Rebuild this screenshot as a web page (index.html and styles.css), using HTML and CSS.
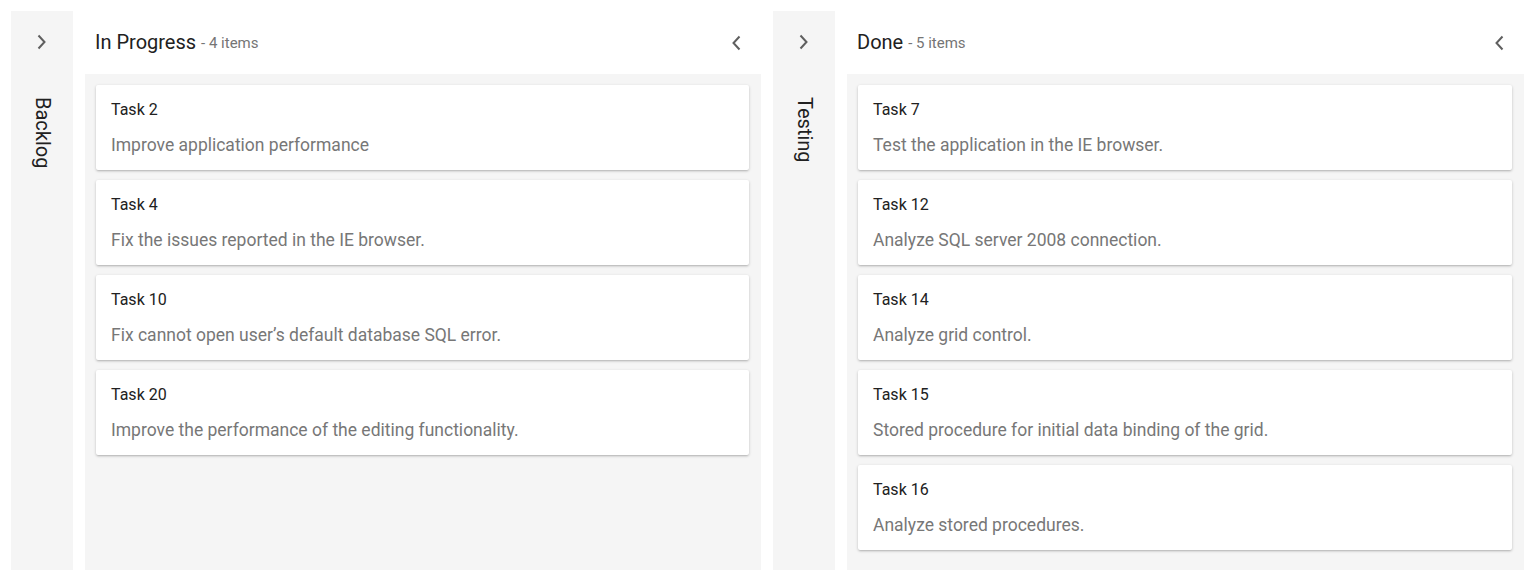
FILE: index.html
```html
<!DOCTYPE html>
<html>
<head>
<meta charset="utf-8">
<link rel="stylesheet" href="styles.css">
</head>
<body>
<div class="board">
  <div class="col-collapsed">
    <svg class="chev" width="20" height="20" viewBox="0 0 20 20"><path d="M6.5 3.5 L12.5 10 L6.5 16.5" fill="none" stroke="#5f5f5f" stroke-width="2"/></svg>
    <div class="vtext">Backlog</div>
  </div>
  <div class="col">
    <div class="col-head">
      <div class="title">In Progress <span class="count">- 4 items</span></div>
      <svg class="chev" width="20" height="20" viewBox="0 0 20 20"><path d="M13.5 3.5 L7.5 10 L13.5 16.5" fill="none" stroke="#5f5f5f" stroke-width="2"/></svg>
    </div>
    <div class="col-body">
      <div class="card"><div class="card-title">Task 2</div><div class="card-text">Improve application performance</div></div>
      <div class="card"><div class="card-title">Task 4</div><div class="card-text">Fix the issues reported in the IE browser.</div></div>
      <div class="card"><div class="card-title">Task 10</div><div class="card-text">Fix cannot open user’s default database SQL error.</div></div>
      <div class="card"><div class="card-title">Task 20</div><div class="card-text">Improve the performance of the editing functionality.</div></div>
    </div>
  </div>
  <div class="col-collapsed">
    <svg class="chev" width="20" height="20" viewBox="0 0 20 20"><path d="M6.5 3.5 L12.5 10 L6.5 16.5" fill="none" stroke="#5f5f5f" stroke-width="2"/></svg>
    <div class="vtext">Testing</div>
  </div>
  <div class="col col-wide">
    <div class="col-head">
      <div class="title">Done <span class="count">- 5 items</span></div>
      <svg class="chev" width="20" height="20" viewBox="0 0 20 20"><path d="M13.5 3.5 L7.5 10 L13.5 16.5" fill="none" stroke="#5f5f5f" stroke-width="2"/></svg>
    </div>
    <div class="col-body">
      <div class="card"><div class="card-title">Task 7</div><div class="card-text">Test the application in the IE browser.</div></div>
      <div class="card"><div class="card-title">Task 12</div><div class="card-text">Analyze SQL server 2008 connection.</div></div>
      <div class="card"><div class="card-title">Task 14</div><div class="card-text">Analyze grid control.</div></div>
      <div class="card"><div class="card-title">Task 15</div><div class="card-text">Stored procedure for initial data binding of the grid.</div></div>
      <div class="card"><div class="card-title">Task 16</div><div class="card-text">Analyze stored procedures.</div></div>
    </div>
  </div>
</div>
</body>
</html>
```
FILE: styles.css
```css
html, body {
  margin: 0;
  padding: 0;
  background: #fff;
  font-family: Roboto, "Noto Sans", sans-serif;
}
.board {
  display: flex;
  gap: 12px;
  padding: 11px 0 0 11px;
  height: 559px;
}
.col-collapsed {
  width: 62px;
  flex: none;
  background: #f5f5f5;
  display: flex;
  flex-direction: column;
  align-items: center;
  padding-top: 21px;
  box-sizing: border-box;
}
.vtext {
  writing-mode: vertical-rl;
  font-size: 20px;
  color: #212121;
  margin-top: 45px;
  margin-left: 1px;
}
.col {
  width: 676px;
  flex: none;
  display: flex;
  flex-direction: column;
}
.col-wide {
  width: 677px;
}
.col-head {
  height: 63px;
  display: flex;
  align-items: center;
  justify-content: space-between;
  padding: 0 15px 0 10px;
  box-sizing: border-box;
}
.title {
  font-size: 20px;
  color: #212121;
  padding-bottom: 2px;
}
.count {
  font-size: 15px;
  color: #757575;
  position: relative;
  top: -1px;
}
.col-body {
  flex: 1;
  background: #f5f5f5;
  padding: 11px 12px 0 11px;
  display: flex;
  flex-direction: column;
  gap: 10px;
}
.card {
  height: 85px;
  box-sizing: border-box;
  background: #fff;
  border-radius: 2px;
  box-shadow: 0 1px 3px rgba(0,0,0,0.22), 0 2px 2px -1px rgba(0,0,0,0.1);
  padding: 15px 15px 0 15px;
}
.card-title {
  font-size: 16px;
  color: #212121;
  line-height: 20px;
}
.card-text {
  font-size: 17.5px;
  color: #777777;
  line-height: 22px;
  margin-top: 14px;
}
```
